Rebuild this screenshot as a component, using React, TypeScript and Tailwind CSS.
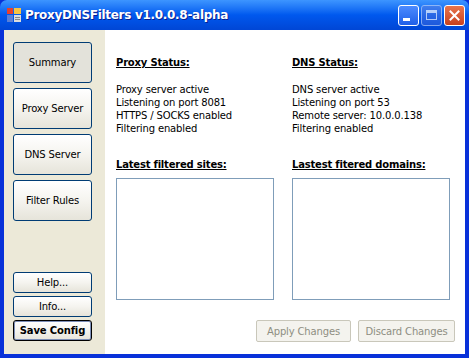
import React from 'react';

const font = { fontFamily: 'Tahoma, "DejaVu Sans", Verdana, sans-serif' };

const NavButton = ({ label, active }: { label: string; active?: boolean }) => (
    <div
        className={`h-[41px] w-[79px] flex items-center justify-center rounded-[3px] border border-[#003c74] text-[10px] tracking-[-0.15px] text-black ${
            active ? 'bg-[#e3e2da]' : 'bg-gradient-to-b from-white via-[#f5f4ef] to-[#e6e4da]'
        }`}
    >
        {label}
    </div>
);

const SmallButton = ({ label, bold }: { label: string; bold?: boolean }) => (
    <div
        className={`h-[21px] w-[79px] flex items-center justify-center rounded-[3px] text-[10px] tracking-[-0.15px] text-black bg-gradient-to-b from-white via-[#f5f4ef] to-[#e6e4da] ${
            bold ? 'border border-black shadow-[inset_0_0_0_1px_#7d8fb8] font-bold' : 'border border-[#003c74]'
        }`}
    >
        {label}
    </div>
);

const StatusBlock = ({ title, lines, list }: { title: string; lines: string[]; list: string }) => (
    <div>
        <div className="text-[10px] tracking-[-0.2px] font-bold underline leading-[13px]">{title}</div>
        <div className="mt-[14px] text-[10px] tracking-[-0.15px] leading-[13px]">
            {lines.map((l) => (
                <div key={l}>{l}</div>
            ))}
        </div>
        <div className="mt-[23px] text-[10px] tracking-[-0.2px] font-bold underline leading-[13px]">{list}</div>
        <div className="mt-[7px] h-[122px] w-[158px] border border-[#7f9db9] bg-white" />
    </div>
);

export default function App() {
    return (
        <div className="w-[469px] h-[358px] flex flex-col bg-[#0831d9] overflow-hidden" style={font}>
            {/* title bar */}
            <div className="h-[30px] flex items-center rounded-t-[7px] bg-gradient-to-b from-[#3d95ff] via-[#0058ee] to-[#0046d5] px-[6px]">
                <svg width="16" height="16" viewBox="0 0 16 16" className="mr-[3px]">
                    <rect x="1" y="1" width="6" height="6" fill="#e8402c" />
                    <rect x="8" y="1" width="7" height="6" fill="#f6c342" />
                    <rect x="1" y="8" width="6" height="7" fill="#5a7fd6" />
                    <rect x="8" y="8" width="7" height="7" fill="#dcdcdc" />
                    <rect x="9" y="10" width="5" height="1" fill="#888" />
                    <rect x="9" y="12" width="5" height="1" fill="#888" />
                </svg>
                <span className="text-white font-bold text-[12px] tracking-[-0.3px] [text-shadow:1px_1px_0_#0a1f8f]">
                    ProxyDNSFilters v1.0.0.8-alpha
                </span>
                <div className="ml-auto flex gap-[2px] mr-[-2px]">
                    <div className="w-[21px] h-[21px] rounded-[3px] border border-white bg-gradient-to-b from-[#4c8bff] to-[#1f5fe8] flex items-end justify-start p-[4px]">
                        <div className="w-[7px] h-[3px] bg-white" />
                    </div>
                    <div className="w-[21px] h-[21px] rounded-[3px] border border-[#b9cdf7] bg-gradient-to-b from-[#4d7fe9] to-[#2a5fdc] flex items-center justify-center opacity-70">
                        <div className="w-[11px] h-[10px] border border-white border-t-[3px]" />
                    </div>
                    <div className="w-[21px] h-[21px] rounded-[3px] border border-white bg-gradient-to-b from-[#e8744c] to-[#c7401d] flex items-center justify-center">
                        <svg width="11" height="11" viewBox="0 0 11 11">
                            <path d="M1.5 1.5 L9.5 9.5 M9.5 1.5 L1.5 9.5" stroke="white" strokeWidth="2" strokeLinecap="square" />
                        </svg>
                    </div>
                </div>
            </div>

            {/* client */}
            <div className="flex-1 flex mx-[4px] mb-[4px]">
                <div className="w-[101px] bg-[#ece9d8] flex flex-col pl-[9px] pt-[12px] pb-[13px]">
                    <div className="flex flex-col gap-[5px]">
                        <NavButton label="Summary" active />
                        <NavButton label="Proxy Server" />
                        <NavButton label="DNS Server" />
                        <NavButton label="Filter Rules" />
                    </div>
                    <div className="mt-auto flex flex-col gap-[3px]">
                        <SmallButton label="Help..." />
                        <SmallButton label="Info..." />
                        <SmallButton label="Save Config" bold />
                    </div>
                </div>
                <div className="flex-1 bg-white flex flex-col pl-[11px] pt-[26px] pr-[10px] pb-[12px] text-black">
                    <div className="flex gap-[18px]">
                        <StatusBlock
                            title="Proxy Status:"
                            list="Latest filtered sites:"
                            lines={['Proxy server active', 'Listening on port 8081', 'HTTPS / SOCKS enabled', 'Filtering enabled']}
                        />
                        <StatusBlock
                            title="DNS Status:"
                            list="Lastest fitered domains:"
                            lines={['DNS server active', 'Listening on port 53', 'Remote server: 10.0.0.138', 'Filtering enabled']}
                        />
                    </div>
                    <div className="mt-auto flex justify-end gap-[7px]">
                        <div className="h-[22px] w-[95px] flex items-center justify-center border border-[#c9c7ba] rounded-[2px] bg-[#f4f3ee] text-[10px] tracking-[-0.15px] text-[#8e8e82]">
                            Apply Changes
                        </div>
                        <div className="h-[22px] w-[97px] flex items-center justify-center border border-[#c9c7ba] rounded-[2px] bg-[#f4f3ee] text-[10px] tracking-[-0.15px] text-[#8e8e82]">
                            Discard Changes
                        </div>
                    </div>
                </div>
            </div>
        </div>
    );
}
